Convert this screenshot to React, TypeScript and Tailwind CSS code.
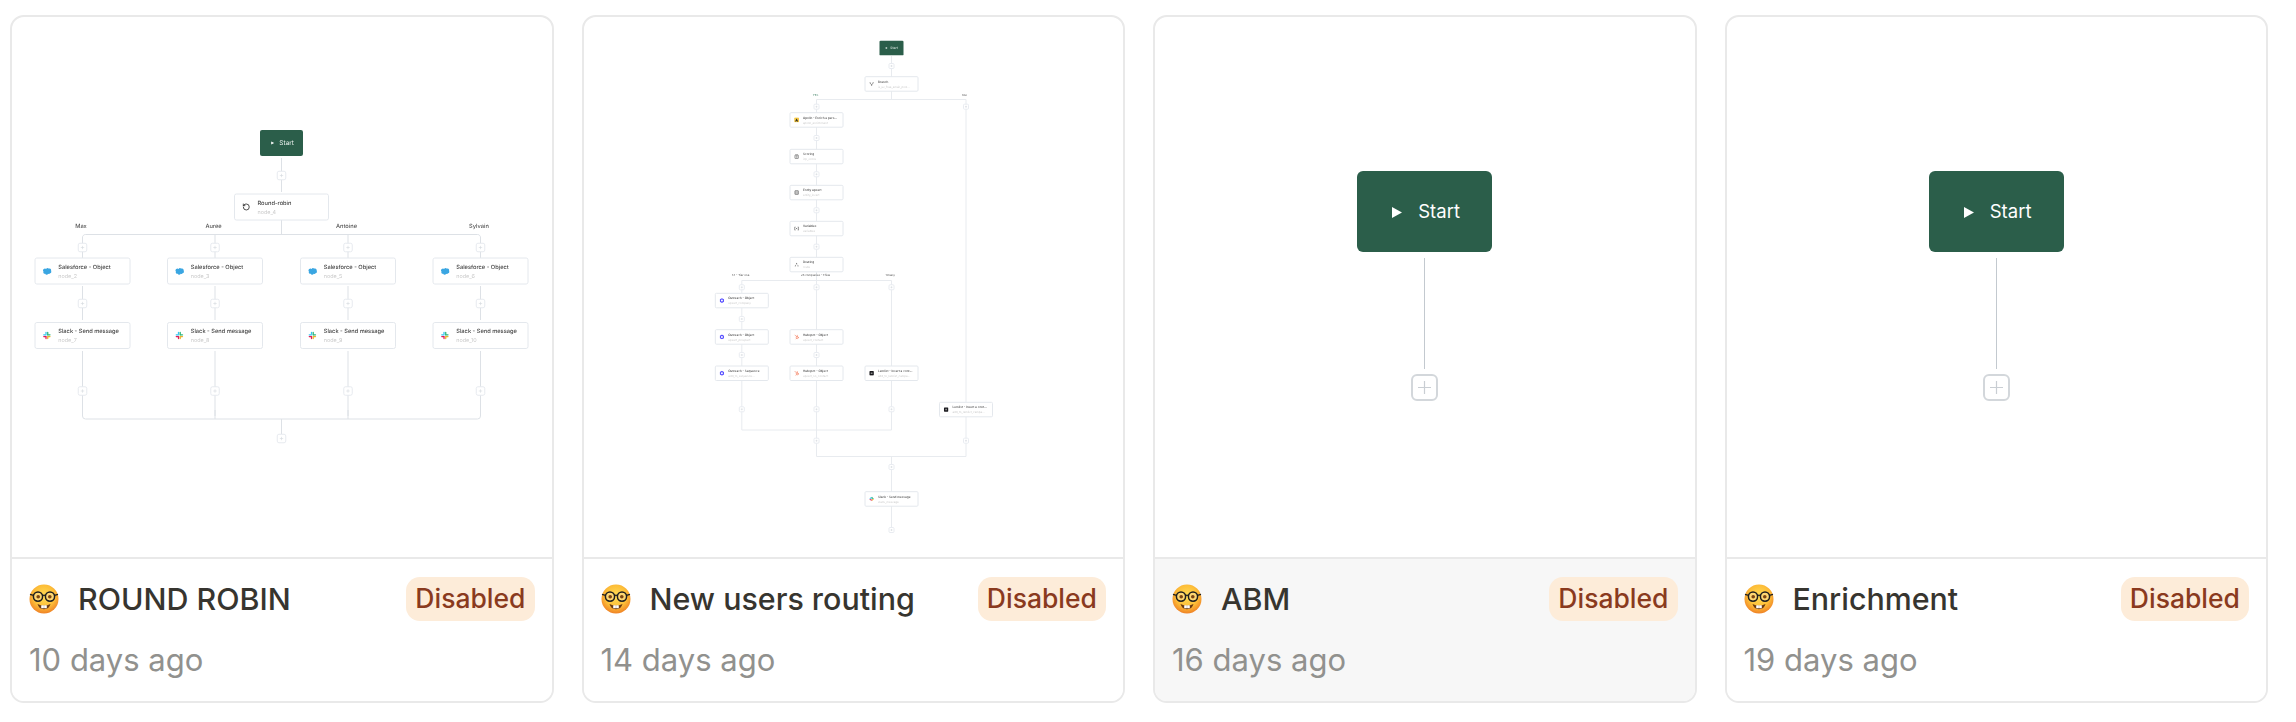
import React from "react";

type IconName = "salesforce" | "slack" | "round" | "branch" | "apollo" | "scoring" | "entity" | "variables" | "routing" | "outreach" | "hubspot" | "lemlist";

function Glyph({ name }: { name: IconName }) {
  // all glyphs are drawn in a 24 unit box
  switch (name) {
    case "salesforce":
      return <path d="M10 6.5a4.2 4.2 0 0 1 6.7-.9 5 5 0 0 1 7 4.8 4.4 4.4 0 0 1-3.2 7.4 3.8 3.8 0 0 1-5 1.6 4.4 4.4 0 0 1-8-.4 3.9 3.9 0 0 1-4.6-5.6 4.4 4.4 0 0 1 2-7.4 4.6 4.6 0 0 1 5.1.5z" fill="#3aa6e2" />;
    case "slack":
      return (
        <g>
          <rect x="2" y="8.6" width="9.4" height="3.4" rx="1.7" fill="#36c5f0" />
          <rect x="8" y="2" width="3.4" height="8" rx="1.7" fill="#36c5f0" />
          <rect x="12.6" y="2" width="3.4" height="10" rx="1.7" fill="#2eb67d" />
          <rect x="12.6" y="8.6" width="9.4" height="3.4" rx="1.7" fill="#2eb67d" />
          <rect x="12.6" y="13.2" width="9.4" height="3.4" rx="1.7" fill="#ecb22e" />
          <rect x="12.6" y="14" width="3.4" height="8" rx="1.7" fill="#ecb22e" />
          <rect x="2" y="13.2" width="9.4" height="3.4" rx="1.7" fill="#e01e5a" />
          <rect x="8" y="14" width="3.4" height="8" rx="1.7" fill="#e01e5a" />
        </g>
      );
    case "round":
      return (
        <g fill="none" stroke="#333" strokeWidth="2.6" strokeLinecap="round" strokeLinejoin="round">
          <path d="M3 12a9 9 0 1 0 9-9 9.75 9.75 0 0 0-6.74 2.74L3 8" />
          <path d="M3 3v5h5" />
        </g>
      );
    case "branch":
      return <path d="M5 4v5l7 6 7-6V4M12 15v6" fill="none" stroke="#555" strokeWidth="3" />;
    case "apollo":
      return (
        <g>
          <rect x="1" y="1" width="22" height="22" rx="4" fill="#f6c945" />
          <path d="M12 5l7 14h-5l-2-4-2 4H5z" fill="#222" />
        </g>
      );
    case "scoring":
      return (
        <g fill="none" stroke="#555" strokeWidth="2.6">
          <rect x="4" y="5" width="16" height="16" rx="2" />
          <path d="M8 10h8M8 15h8M9 2v4M15 2v4" />
        </g>
      );
    case "entity":
      return (
        <g fill="none" stroke="#555" strokeWidth="2.6">
          <rect x="4" y="3" width="16" height="18" rx="2" />
          <path d="M4 9h16M4 15h16" />
        </g>
      );
    case "variables":
      return <path d="M7 5H3v14h4M17 5h4v14h-4M9 9l6 6M15 9l-6 6" fill="none" stroke="#555" strokeWidth="2.6" />;
    case "routing":
      return <path d="M12 4l-4 7h8zM6 14l-3 6h7zM18 14l-3 6h7z" fill="#666" />;
    case "outreach":
      return (
        <g>
          <path d="M12 1l9.5 5.5v11L12 23l-9.5-5.5v-11z" fill="#5951ff" />
          <circle cx="12" cy="12" r="4.5" fill="#fff" />
        </g>
      );
    case "hubspot":
      return (
        <g fill="none" stroke="#f57e5e" strokeWidth="2.8" strokeLinecap="round">
          <circle cx="15" cy="15" r="5" />
          <path d="M15 10V4M4 3l8 8M8 22l3-3" />
        </g>
      );
    case "lemlist":
      return (
        <g>
          <rect x="2" y="2" width="20" height="20" rx="3" fill="#1b1b1f" />
          <rect x="8" y="8" width="8" height="7" rx="1" fill="#8a8a8a" />
        </g>
      );
  }
}

function MiniNode({ x, y, w, h, title, sub, icon, font, iconSize }: { x: number; y: number; w: number; h: number; title: string; sub: string; icon: IconName; font: number; iconSize: number }) {
  const ix = x + w * 0.125 - iconSize / 2;
  const iy = y + h / 2 - iconSize / 2;
  return (
    <g>
      <rect x={x} y={y} width={w} height={h} rx={h * 0.07} fill="#fff" stroke="#e4e8ed" strokeWidth={1} />
      <svg x={ix} y={iy} width={iconSize} height={iconSize} viewBox="0 0 24 24">
        <Glyph name={icon} />
      </svg>
      <text x={x + w * 0.245} y={y + h * 0.42} fontSize={font} fontWeight={500} fill="#444">{title}</text>
      <text x={x + w * 0.245} y={y + h * 0.76} fontSize={font * 0.95} fill="#c9c9c9">{sub}</text>
    </g>
  );
}

function MiniPlus({ cx, cy, s, stroke }: { cx: number; cy: number; s: number; stroke: string }) {
  const r = s / 2;
  return (
    <g>
      <rect x={cx - r} y={cy - r} width={s} height={s} rx={s * 0.2} fill="#fff" stroke={stroke} strokeWidth={0.9} />
      <path d={`M${cx - r * 0.4} ${cy}H${cx + r * 0.4}M${cx} ${cy - r * 0.4}V${cy + r * 0.4}`} stroke="#d4d8dd" strokeWidth={0.6} />
    </g>
  );
}

function MiniStart({ x, y, w, h, font, tri }: { x: number; y: number; w: number; h: number; font: number; tri: number }) {
  const cy = y + h / 2;
  const tx = x + w * 0.26;
  return (
    <g>
      <rect x={x} y={y} width={w} height={h} rx={h * 0.08} fill="#2b5e4a" />
      <path d={`M${tx} ${cy - tri / 2}L${tx + tri} ${cy}L${tx} ${cy + tri / 2}z`} fill="#fff" />
      <text x={x + w * 0.45} y={cy + font * 0.36} fontSize={font} fill="#e9f0ec">Start</text>
    </g>
  );
}

function RoundRobinPreview() {
  const cols = [82.5, 215, 348, 480.5];
  const names = ["Max", "Auree", "Antoine", "Sylvain"];
  const top = ["node_2", "node_3", "node_5", "node_6"];
  const bottom = ["node_7", "node_8", "node_9", "node_10"];
  const line = "#dde1e6";
  return (
    <svg viewBox="12 17 539.5 540" textRendering="geometricPrecision" className="block w-full h-full blur-[0.35px]">
      <g stroke={line} strokeWidth={1} fill="none">
        <path d="M281.5 158V192M281.5 220V234.5" />
        <path d="M82.5 258V238a3 3 0 0 1 3-3.5H477.5a3 3 0 0 1 3 3.5V258M215 234.5V258M348 234.5V258" />
        {cols.map((c) => (
          <path key={c} d={`M${c} 286V320M${c} 351V416`} />
        ))}
        <path d="M82.5 410V416a3 3 0 0 0 3 3H477.5a3 3 0 0 0 3-3V410M215 410V419M348 410V419M281.5 419V434" />
      </g>
      <MiniStart x={260} y={130} w={43} h={26} font={6.5} tri={3} />
      <MiniPlus cx={281.5} cy={175.5} s={8.5} stroke="#e4e8ed" />
      <MiniNode x={234.5} y={194} w={94} h={26} title="Round-robin" sub="node_4" icon="round" font={5.7} iconSize={8} />
      {cols.map((c, i) => (
        <g key={c}>
          <text x={c - 1.5} y={228} fontSize={5.7} textAnchor="middle" fontWeight={500} fill="#555">{names[i]}</text>
          <MiniPlus cx={c} cy={247.5} s={8.5} stroke="#e4e8ed" />
          <MiniNode x={c - 47.5} y={258} w={95} h={26} title="Salesforce - Object" sub={top[i]} icon="salesforce" font={5.7} iconSize={9} />
          <MiniPlus cx={c} cy={303.5} s={8.5} stroke="#e4e8ed" />
          <MiniNode x={c - 47.5} y={322.5} w={95} h={26} title="Slack - Send message" sub={bottom[i]} icon="slack" font={5.7} iconSize={9} />
          <MiniPlus cx={c} cy={391} s={8.5} stroke="#e4e8ed" />
        </g>
      ))}
      <MiniPlus cx={281.5} cy={438.5} s={8.5} stroke="#e4e8ed" />
    </svg>
  );
}

function UsersRoutingPreview() {
  const line = "#e8ebef";
  const pl = "#e6eaef";
  const w = 53;
  const h = 14.5;
  const f = 3.05;
  const nodes: { c: number; y: number; t: string; s: string; i: IconName }[] = [
    { c: 891, y: 76.7, t: "Branch", s: "is_us_free_email_pool...", i: "branch" },
    { c: 816, y: 112.7, t: "Apollo - Enrich a pers...", s: "apollo_enrichment", i: "apollo" },
    { c: 816, y: 149.3, t: "Scoring", s: "icp_score", i: "scoring" },
    { c: 816, y: 185.3, t: "Entity upsert", s: "entity_insert", i: "entity" },
    { c: 816, y: 221.3, t: "Variables", s: "variables", i: "variables" },
    { c: 816, y: 257.3, t: "Routing", s: "route", i: "routing" },
    { c: 741.3, y: 293.3, t: "Outreach - Object", s: "upsert_company", i: "outreach" },
    { c: 741.3, y: 329.7, t: "Outreach - Object", s: "upsert_prospect", i: "outreach" },
    { c: 741.3, y: 366, t: "Outreach - Sequence", s: "add_to_sequence...", i: "outreach" },
    { c: 816, y: 329.7, t: "Hubspot - Object", s: "upsert_contact", i: "hubspot" },
    { c: 816, y: 366, t: "Hubspot - Object", s: "upsert_no_contact", i: "hubspot" },
    { c: 891, y: 366, t: "Lemlist - Insert a cont...", s: "add_to_lemlist_campa...", i: "lemlist" },
    { c: 965.5, y: 402.3, t: "Lemlist - Insert a cont...", s: "add_to_lemlist_campa...", i: "lemlist" },
    { c: 891, y: 491.7, t: "Slack - Send message", s: "slack_message", i: "slack" },
  ];
  const pluses: [number, number][] = [
    [891, 66], [816, 106.7], [965.5, 106.7], [816, 138], [816, 174.3], [816, 210.3], [816, 246.7],
    [741.3, 287.3], [816, 287.3], [891, 287.3], [741.3, 319], [741.3, 355], [816, 355],
    [741.3, 409.3], [816, 409.3], [891, 409.3], [816, 440.7], [965.5, 440.7], [891, 467], [891, 530],
  ];
  return (
    <svg viewBox="583.5 17 539.5 540" textRendering="geometricPrecision" className="block w-full h-full blur-[0.5px]">
      <g stroke={line} strokeWidth={1} fill="none">
        <path d="M891 56V77M891 91V99.5M816 99.5H965.5M816 99.5V113M965.5 99.5V402M816 127V258" />
        <path d="M741.3 280.5H891M741.3 280.5V294M816 272V366M891 280.5V366M741.3 308V366" />
        <path d="M741.3 380V430H891V380M816 380V456.5H965.5V417M891 456.5V492M891 506V527" />
      </g>
      <MiniStart x={879} y={40.7} w={24} h={14.6} font={3.4} tri={1.8} />
      {pluses.map(([x, y]) => (
        <MiniPlus key={`${x}-${y}`} cx={x} cy={y} s={5} stroke={pl} />
      ))}
      <text x={815} y={95.5} fontSize={2.9} textAnchor="middle" fill="#4d8a6f">YES</text>
      <text x={964} y={95.5} fontSize={2.9} textAnchor="middle" fill="#444">NO</text>
      <text x={740.3} y={276} fontSize={2.9} textAnchor="middle" fill="#444">1:1 - Tier one</text>
      <text x={815} y={276} fontSize={2.9} textAnchor="middle" fill="#444">25 companies - 1:few</text>
      <text x={889.7} y={276} fontSize={2.9} textAnchor="middle" fill="#444">1:many</text>
      {nodes.map((n) => (
        <MiniNode key={`${n.c}-${n.y}`} x={n.c - w / 2} y={n.y} w={w} h={h} title={n.t} sub={n.s} icon={n.i} font={f} iconSize={5.2} />
      ))}
    </svg>
  );
}

function EmptyPreview() {
  return (
    <div className="flex flex-col items-center pt-[154px]">
      <div className="flex h-[81px] w-[135px] items-center gap-[16px] rounded-[6px] bg-[#2b5e4a] pl-[35px] pt-[1px] text-[18.5px] text-white">
        <svg width="10" height="11" viewBox="0 0 10 11" className="shrink-0">
          <path d="M0 0L10 5.5L0 11z" fill="#fff" />
        </svg>
        <span>Start</span>
      </div>
      <div className="mt-[6px] h-[111px] w-px bg-[#c3c9cf]" />
      <div className="mt-[5px] flex h-[27px] w-[27px] items-center justify-center rounded-[6px] border-2 border-[#d3d7db] bg-white">
        <svg width="15" height="15" viewBox="0 0 15 15">
          <path d="M1 7.5H14M7.5 1V14" stroke="#c9ced3" strokeWidth="1.2" />
        </svg>
      </div>
    </div>
  );
}

function NerdFace() {
  return (
    <svg width="30" height="30" viewBox="0 0 30 30" className="shrink-0">
      <defs>
        <radialGradient id="nerdFace" cx="50%" cy="40%" r="62%">
          <stop offset="0%" stopColor="#ffdd55" />
          <stop offset="60%" stopColor="#fdbe38" />
          <stop offset="100%" stopColor="#ee7d24" />
        </radialGradient>
      </defs>
      <circle cx="15" cy="15" r="14.5" fill="url(#nerdFace)" />
      <circle cx="9" cy="12.6" r="4.6" fill="#fdd672" stroke="#1f1f1f" strokeWidth="1.5" />
      <circle cx="21" cy="12.6" r="4.6" fill="#fdd672" stroke="#1f1f1f" strokeWidth="1.5" />
      <path d="M13.4 11.6q1.6-1 3.2 0M1 10.4l3.6 1M29 10.4l-3.6 1" stroke="#1f1f1f" strokeWidth="1.4" fill="none" />
      <circle cx="9.2" cy="12.8" r="1.8" fill="#7a4413" />
      <circle cx="20.8" cy="12.8" r="1.8" fill="#7a4413" />
      <path d="M8.5 20q6.5 3.6 13 0q-1.4 5.2-6.5 5.2T8.5 20z" fill="#6b3a12" />
      <rect x="12.2" y="21.2" width="2.7" height="3" rx=".5" fill="#fff" />
      <rect x="15.1" y="21.2" width="2.7" height="3" rx=".5" fill="#fff" />
    </svg>
  );
}

function Card({ name, date, preview, active }: { name: string; date: string; preview: React.ReactNode; active?: boolean }) {
  return (
    <div className="flex h-[688px] flex-col overflow-hidden rounded-[14px] border-2 border-[#e9e9e9] bg-white">
      <div className="h-[540px] shrink-0 border-b-2 border-[#e9e9e9] box-content">{preview}</div>
      <div className={`flex-1 px-[17px] pt-[18px] ${active ? "bg-[#f7f7f7]" : "bg-white"}`}>
        <div className="flex h-[44px] items-center justify-between">
          <div className="flex items-center gap-[19px]">
            <NerdFace />
            <span className="text-[30.4px] font-medium leading-none text-[#37352f]">{name}</span>
          </div>
          <span className="flex h-[44px] items-center rounded-[14px] bg-[#fdecd9] px-[9px] text-[26.5px] font-medium text-[#8a3a1e]">Disabled</span>
        </div>
        <div className="mt-[19px] text-[31px] leading-[40px] text-[#91918e]">{date}</div>
      </div>
    </div>
  );
}

export default function App() {
  return (
    <div className="grid h-[722px] w-[2296px] grid-cols-4 items-start gap-[28px] bg-white pl-[10px] pr-[28px] pt-[15px] [font-family:Inter,sans-serif]">
      <Card name="ROUND ROBIN" date="10 days ago" preview={<RoundRobinPreview />} />
      <Card name="New users routing" date="14 days ago" preview={<UsersRoutingPreview />} />
      <Card name="ABM" date="16 days ago" preview={<EmptyPreview />} active />
      <Card name="Enrichment" date="19 days ago" preview={<EmptyPreview />} />
    </div>
  );
}
